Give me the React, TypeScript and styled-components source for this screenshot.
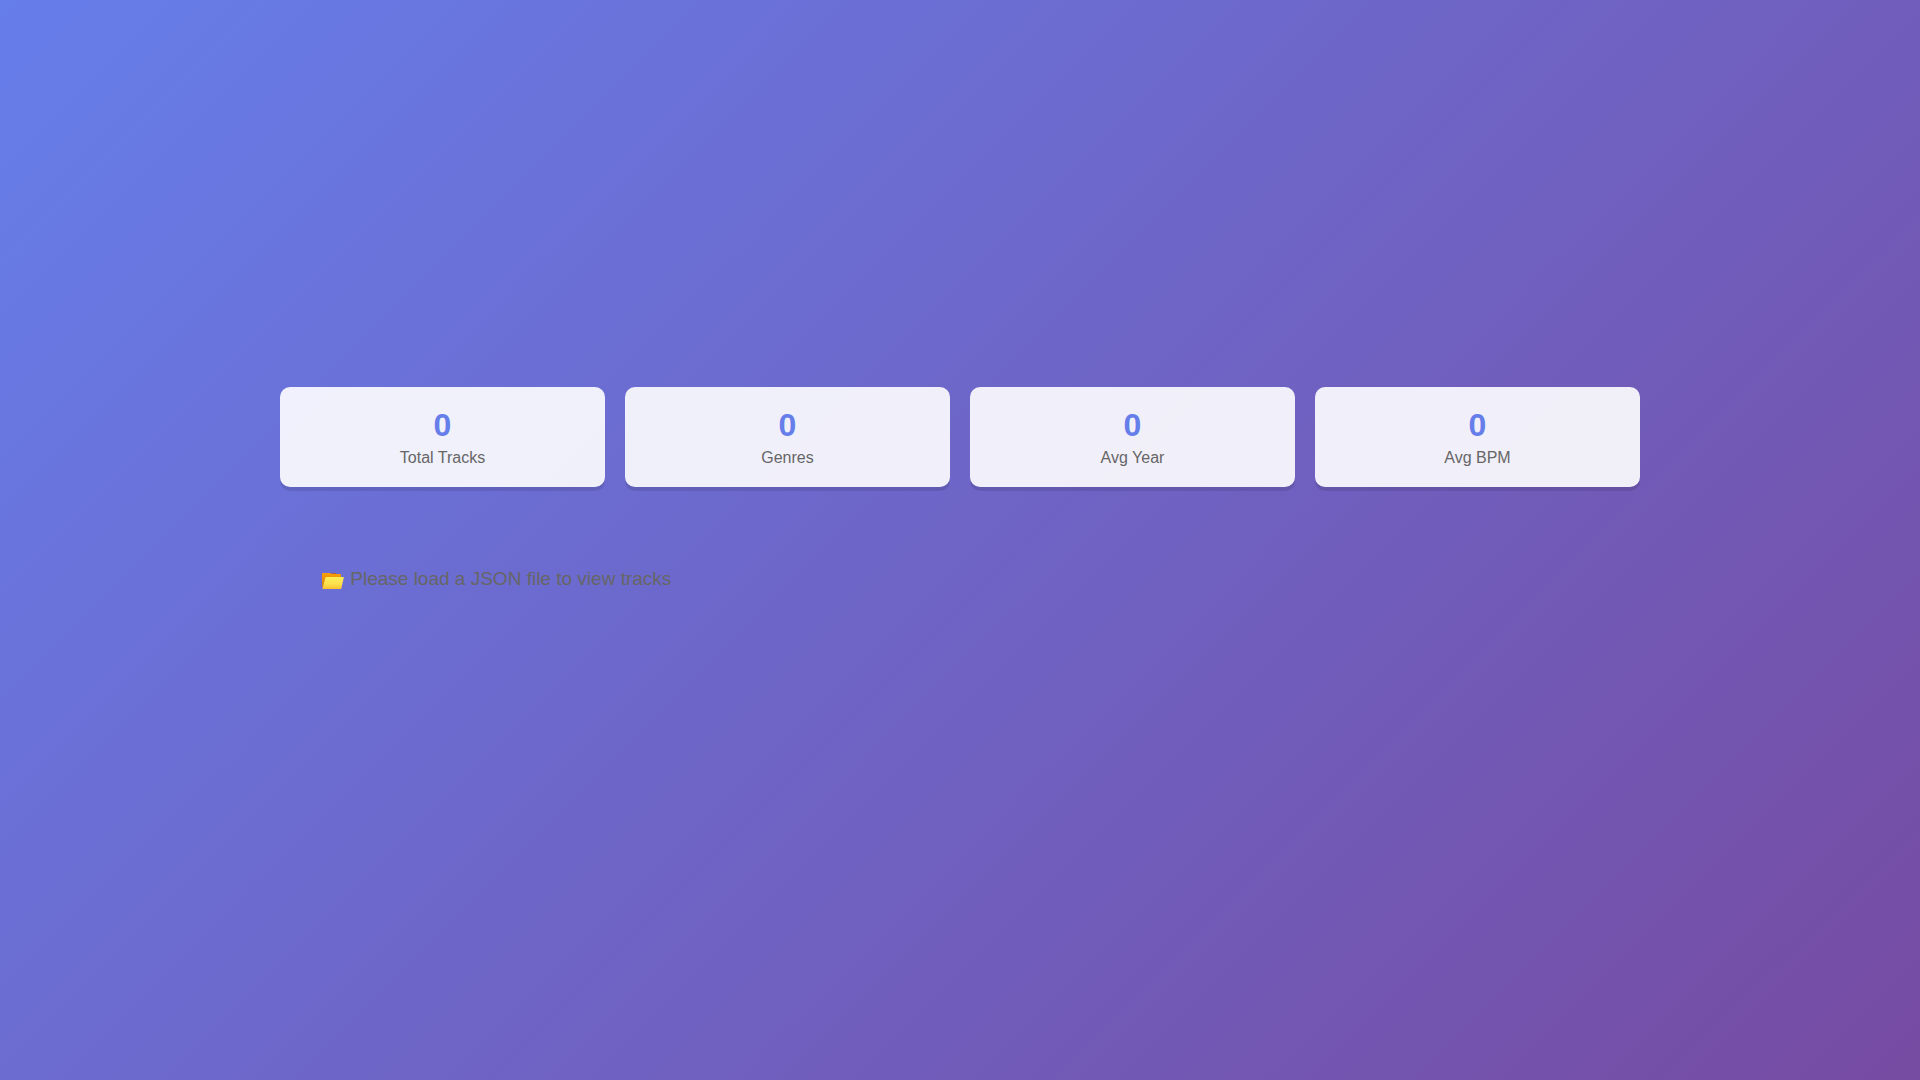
import React from 'react';
import styled, { createGlobalStyle } from 'styled-components';

const GlobalStyle = createGlobalStyle`
  * { box-sizing: border-box; margin: 0; padding: 0; }
  body {
    min-height: 100vh;
    font-family: 'Liberation Sans', Arial, sans-serif;
    background: linear-gradient(135deg, #667eea 0%, #764ba2 100%);
  }
`;

const Page = styled.main`
  min-height: 100vh;
  display: flex;
  align-items: center;
  justify-content: center;
  padding: 20px 20px 82px;
`;

const Container = styled.div`
  width: 100%;
  max-width: 1400px;
  padding: 20px;
`;

const Stats = styled.dl`
  display: grid;
  grid-template-columns: repeat(4, 1fr);
  gap: 20px;
  margin-bottom: 40px;
`;

const Card = styled.div`
  display: flex;
  flex-direction: column-reverse;
  gap: 5px;
  padding: 20px;
  border-radius: 10px;
  text-align: center;
  background: rgba(255, 255, 255, 0.9);
  box-shadow: 0 4px 0 rgba(0, 0, 0, 0.1);
`;

const Value = styled.dd`
  font-size: 32px;
  line-height: 37px;
  font-weight: bold;
  color: #667eea;
`;

const Label = styled.dt`
  font-size: 16px;
  line-height: 18px;
  color: #666;
`;

const Message = styled.p`
  padding: 40px;
  font-size: 19px;
  line-height: 24px;
  color: #666;
`;

const FolderSvg = styled.svg`
  width: 25px;
  height: 20px;
  vertical-align: -5px;
`;

function FolderIcon() {
  return (
    <FolderSvg viewBox="0 0 25 20" aria-hidden="true">
      <defs>
        <linearGradient id="folderFront" x1="0" y1="0" x2="0" y2="1">
          <stop offset="0" stopColor="#ffee58" />
          <stop offset="0.6" stopColor="#fde04e" />
          <stop offset="1" stopColor="#f9c02d" />
        </linearGradient>
        <linearGradient id="folderBack" x1="0" y1="0" x2="0" y2="1">
          <stop offset="0" stopColor="#ffa000" />
          <stop offset="1" stopColor="#c97a1e" />
        </linearGradient>
      </defs>
      <path d="M2.2 3H10l1.6 1H20.4q.6 0 .6.6V17H2.6L2 16.4V3.4Z" fill="url(#folderBack)" />
      <path d="M10.8 3H16v1h-4Z" fill="#a65f3e" />
      <path d="M6 7H23.4q.5 0 .4.5L21.3 18.4q-.1.6-.7.6H3q-.6 0-.5-.6L5.4 7.5Q5.5 7 6 7Z" fill="url(#folderFront)" />
    </FolderSvg>
  );
}

const stats = [
  { label: 'Total Tracks', value: 0 },
  { label: 'Genres', value: 0 },
  { label: 'Avg Year', value: 0 },
  { label: 'Avg BPM', value: 0 },
];

export default function App() {
  return (
    <Page>
      <GlobalStyle />
      <Container>
        <Stats>
          {stats.map(({ label, value }) => (
            <Card key={label}>
              <Label>{label}</Label>
              <Value>{value}</Value>
            </Card>
          ))}
        </Stats>
        <Message>
          <FolderIcon /> Please load a JSON file to view tracks
        </Message>
      </Container>
    </Page>
  );
}
